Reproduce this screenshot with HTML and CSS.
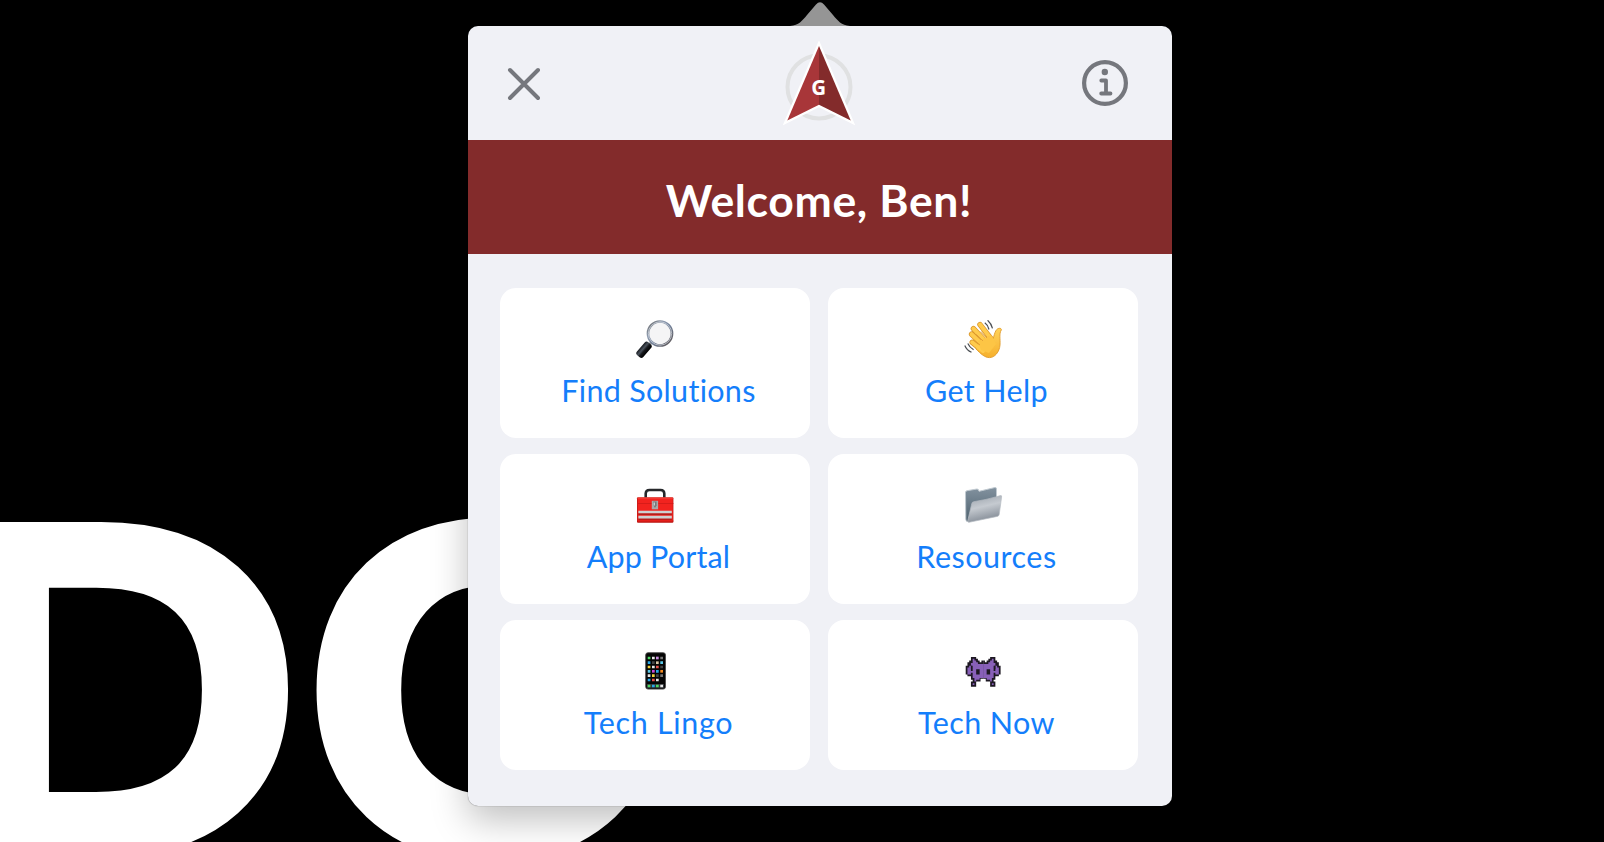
FILE: index.html
```html
<!DOCTYPE html>
<html lang="en">
<head>
<meta charset="utf-8">
<title>Welcome</title>
<link rel="stylesheet" href="styles.css">
</head>
<body>
<svg class="backdrop" viewBox="0 0 1604 842" aria-hidden="true">
  <text class="letter" transform="translate(-67 854) scale(1.149 1)">D</text>
  <text class="letter" transform="translate(298 854) scale(1.11 1)">O</text>
</svg>
<main class="popover">
  <svg class="pointer" viewBox="0 0 60 25"><path d="M0 25C9 24 12 20 17 14L26 3.500Q30-1 34 3.500L43 14C48 20 51 24 60 25Z"/></svg>
  <header class="bar">
    <svg class="close" viewBox="0 0 34 34"><path d="M3 3l28 28M31 3L3 31"/></svg>
    <svg class="logo" viewBox="0 0 72 86">
      <circle class="ring" cx="36" cy="46" r="31.500"/>
      <path class="edge" d="M36 5L4.300 79.500 36 63.700 67.700 79.500Z"/>
      <path class="left" d="M36 5L4.300 79.500 36 63.700Z"/>
      <path class="right" d="M36 5L67.700 79.500 36 63.700Z"/>
      <text x="35.600" y="53.500">G</text>
    </svg>
    <svg class="info" viewBox="0 0 46 46"><circle class="rim" cx="23" cy="23" r="20.900"/><circle class="dot" cx="22.800" cy="12" r="3.200"/><path d="M19.300 20.500H24V33.300M19.200 33.500H28.500"/></svg>
  </header>
  <h1 class="banner">Welcome, Ben!</h1>
  <nav class="grid">
    <a class="card">
      <svg class="icon" viewBox="0 0 40 40">
        <defs>
          <linearGradient id="rim" x2="1" y2="1"><stop offset="0" stop-color="#666"/><stop offset=".3" stop-color="#8f9cb0"/><stop offset=".55" stop-color="#72819a"/><stop offset="1" stop-color="#5b5250"/></linearGradient>
          <linearGradient id="grip" x2="0" y2="1"><stop offset="0" stop-color="#15181d"/><stop offset=".35" stop-color="#4a525c"/><stop offset=".6" stop-color="#15171b"/><stop offset="1" stop-color="#000"/></linearGradient>
        </defs>
        <path d="M13 27l4.500-4.500" stroke="#999" stroke-width="3"/>
        <rect x="-8.500" y="-4.200" width="17" height="8.400" rx="2.600" transform="translate(9 30.800) rotate(-49)" fill="url(#grip)"/>
        <circle cx="25" cy="14.500" r="12" fill="#f5f5f6" stroke="url(#rim)" stroke-width="2.700"/>
        <circle cx="25" cy="14.500" r="11.700" fill="none" stroke="#d8dce2" stroke-width=".7"/>
      </svg>
      <span class="label find">Find Solutions</span>
    </a>
    <a class="card">
      <svg class="icon" viewBox="0 0 40 40">
        <defs><linearGradient id="skin" x2="0" y2="1"><stop offset="0" stop-color="#ffd25a"/><stop offset="1" stop-color="#f6b02d"/></linearGradient></defs>
        <g fill="none" stroke="#d9952b" stroke-linecap="round" stroke-width="5.400"><path d="M9.200 23.300L21 33M8.600 15.200L22 28M10.400 9.600L25 25M17 5.600L29 21"/></g>
        <path d="M13 26.500L28 17 30 20C31 17 31.500 14 33 11.500 35 8.300 39 9 38.300 11 35.800 15 37.500 20 37 26 36.500 33 31.500 38.700 26.500 38.600 21.500 38.600 17.500 34.500 13 30Z" fill="url(#skin)" stroke="#e09b2b" stroke-width=".9"/>
        <g fill="none" stroke="#ffcb4d" stroke-linecap="round" stroke-width="4"><path d="M9.200 23.300L20 32M8.600 15.200L22 28M10.400 9.600L25 25M17 5.600L29 21"/></g>
        <path d="M15 22L28 16 33 25 26 34 18 31Z" fill="#fdc545"/>
        <path d="M13.300 15.300L20 22M18 12.500L24 19M10.500 20.500L17 26" stroke="#e3a136" stroke-width="1"/>
        <path d="M21.800 3.800Q25 6 26 10.500M24.600 1.200Q28.300 4.500 29.500 9.400M1.800 26.500Q3.700 31.300 8.500 33.300M4.800 24.600Q6.500 28.500 10.600 30.700" fill="none" stroke="#4c5055" stroke-width="1.200"/>
      </svg>
      <span class="label help">Get Help</span>
    </a>
    <a class="card">
      <svg class="icon" viewBox="0 0 40 40">
        <path d="M10.700 13V8.500Q10.800 5 14.500 5H25.500Q29.200 5 29.300 8.500V13" fill="none" stroke="#26282b" stroke-width="2.600"/>
        <rect x="2" y="12.300" width="36.400" height="25.400" rx="1" fill="#b91511"/>
        <rect x="2.600" y="12.800" width="35.200" height="23.600" rx=".7" fill="#f2231f"/>
        <path d="M2 18.500h36.400M2 36h36.400" stroke="#d11b18" stroke-width=".8"/>
        <path d="M2.400 12.900h35.600" stroke="#fa6b60" stroke-width=".7"/>
        <path d="M3.400 29h33.400M3.400 34h33.400" stroke="#7f1717" stroke-width="1"/>
        <path d="M3.400 27h33.400M3.400 32.200h33.400" stroke="#cdd0d2" stroke-width="2.700"/>
        <rect x="16.800" y="15.800" width="6.300" height="8.500" fill="#a9a9aa"/>
        <path d="M18.200 16.500h3.400v4L20 23l-1.800-3z" fill="#77797c"/><path d="M19.200 17.500v3" stroke="#eee" stroke-width="1"/>
      </svg>
      <span class="label portal">App Portal</span>
    </a>
    <a class="card">
      <svg class="icon" viewBox="0 0 40 40">
        <defs>
          <linearGradient id="back" x2="0" y2="1"><stop offset="0" stop-color="#82929f"/><stop offset="1" stop-color="#4e616e"/></linearGradient>
          <linearGradient id="front" x2=".3" y2="1"><stop offset="0" stop-color="#98a0a9"/><stop offset=".5" stop-color="#c5cad0"/><stop offset="1" stop-color="#868e98"/></linearGradient>
        </defs>
        <path d="M2.500 7.500Q2.500 6 4 5.700L14 4Q15.500 3.800 16 6.300L32 2.500Q33.500 2.400 33.500 4V28L4 36.500Q2.800 36 2.800 34Z" fill="url(#back)" stroke="#c1cad1" stroke-width="1"/>
        <path d="M8.800 18.500Q9 17 11 16.700 24 14.500 32.500 12L37.500 10.500Q38.900 10.300 38.600 12L36.200 29.500Q36 31 34.300 31.400L6 37.300Q4.400 37.600 4.800 35.500Z" fill="url(#front)" stroke="#b4bac1" stroke-width=".7"/>
      </svg>
      <span class="label resources">Resources</span>
    </a>
    <a class="card">
      <svg class="icon" viewBox="0 0 40 40">
        <rect x="10.700" y="1.700" width="19.800" height="36.400" rx="2.300" fill="#050505" stroke="#4d4d4d" stroke-width=".9"/>
        <path d="M12 33h17v3.800H12z" fill="#33373b"/>
        <g fill="none" stroke-width="2.700">
          <path stroke="#4cd964" d="M12.700 7h2.700M12.700 35h2.700M21 35h2.700"/>
          <path stroke="#e8e8e8" d="M17 7h2.700M17 16h2.700M12.700 24.700h2.700M21 29h2.700M25.300 35h2.700"/>
          <path stroke="#c98ee0" d="M21 7h2.700"/>
          <path stroke="#777" d="M25.300 7h2.700M25.300 24.700h2.700"/>
          <path stroke="#444" d="M17 11.700h2.700M25.300 16h2.700M21 24.700h2.700"/>
          <path stroke="#28a8e8" d="M12.700 11.700h2.700M21 20.300h2.700M12.700 29h2.700M17 35h2.700"/>
          <path stroke="#d8c8a8" d="M21 11.700h2.700"/>
          <path stroke="#5ac8e8" d="M25.300 11.700h2.700M12.700 20.300h2.700"/>
          <path stroke="#f5d33c" d="M12.700 16h2.700M17 24.700h2.700"/>
          <path stroke="#e8504a" d="M21 16h2.700M17 29h2.700"/>
          <path stroke="#c848d8" d="M17 20.300h2.700"/>
          <path stroke="#f58a1f" d="M25.300 20.300h2.700"/>
        </g>
      </svg>
      <span class="label lingo">Tech Lingo</span>
    </a>
    <a class="card">
      <svg class="icon" viewBox="0 0 40 40">
        <defs>
          <g id="half">
            <path fill="#1d1822" d="M3 0h3v1h1v1h1v1h1V2h1v10.500h-1.500v1.500h-2.500v3h-3v-3h1v-1h-1v-2H1v-1H0V5h1V3h1V2h1z"/>
            <path fill="#8860b8" d="M4 1h1v1h1v1h1v1h3v8H8v1H6v1H5v-2H4V9H3v1H1V6h1V5h1v2h.600V5H3V3.500h1zM4 15h1v1H4z"/>
            <path fill="#1d1822" d="M3 5h1v3H3zM6 7h2v3H6z"/>
          </g>
        </defs>
        <g transform="translate(2.700 6) scale(1.745)"><use href="#half"/><use href="#half" transform="translate(20 0) scale(-1 1)"/></g>
      </svg>
      <span class="label now">Tech Now</span>
    </a>
  </nav>
</main>
</body>
</html>
```
FILE: styles.css
```css
* { box-sizing: border-box; }
body {
  margin: 0;
  width: 1604px;
  height: 842px;
  overflow: hidden;
  position: relative;
  background: #000;
  font-family: Lato, "Open Sans", sans-serif;
}
.backdrop { position: absolute; inset: 0; width: 1604px; height: 842px; }
.letter { font: 700 451px Inter, sans-serif; fill: #fff; stroke: #fff; stroke-width: 8; }
.popover {
  position: absolute;
  left: 468px;
  top: 26px;
  width: 704px;
  height: 780px;
  border-radius: 10px;
  background: #f0f1f6;
  box-shadow: 0 0 1px rgba(0, 0, 0, .6), 0 14px 36px rgba(0, 0, 0, .25);
}
.pointer { position: absolute; left: 322px; top: -25px; width: 60px; height: 25px; fill: #959595; }
.bar {
  display: flex;
  justify-content: space-between;
  align-items: center;
  height: 114px;
  padding: 0 44px 0 39px;
}
.close { width: 34px; height: 34px; margin-top: 2px; fill: none; stroke: #75777d; stroke-width: 4; stroke-linecap: round; }
.logo { width: 72px; height: 86px; margin: 2px 0 0 14px; }
.ring { fill: none; stroke: #e0e1e2; stroke-width: 4; }
.edge { fill: #fff; stroke: #fff; stroke-width: 4.500; }
.left { fill: #a83639; }
.right { fill: #832b2b; }
.logo text { font: 700 20.500px "Open Sans", sans-serif; fill: #fff; text-anchor: middle; }
.info { width: 46px; height: 46px; fill: none; stroke: #75777d; stroke-width: 3.800; stroke-linecap: round; stroke-linejoin: round; }
.rim { stroke-width: 4.200; }
.dot { fill: #75777d; stroke: none; }
.banner {
  margin: 0;
  height: 114px;
  padding: 4px 2px 0 0;
  display: flex;
  align-items: center;
  justify-content: center;
  background: #832b2b;
  color: #fff;
  font-size: 44.500px;
  font-weight: 700;
  letter-spacing: .650px;
}
.grid {
  display: grid;
  grid-template-columns: 310px 310px;
  grid-auto-rows: 150px;
  gap: 16px 18px;
  padding: 34px 32px;
}
.card {
  display: flex;
  flex-direction: column;
  align-items: center;
  padding-top: 31px;
  border-radius: 16px;
  background: #fff;
}
.icon { width: 40px; height: 40px; flex: none; }
.label {
  margin-top: 11px;
  padding-left: 7px;
  line-height: 40px;
  font-size: 30.500px;
  font-variant-ligatures: none;
  color: #147efb;
  white-space: nowrap;
}
.find { letter-spacing: .300px; }
.help { letter-spacing: .350px; }
.portal { letter-spacing: .150px; }
.resources { letter-spacing: .500px; }
.lingo { letter-spacing: .700px; }
.now { letter-spacing: .400px; }
```
